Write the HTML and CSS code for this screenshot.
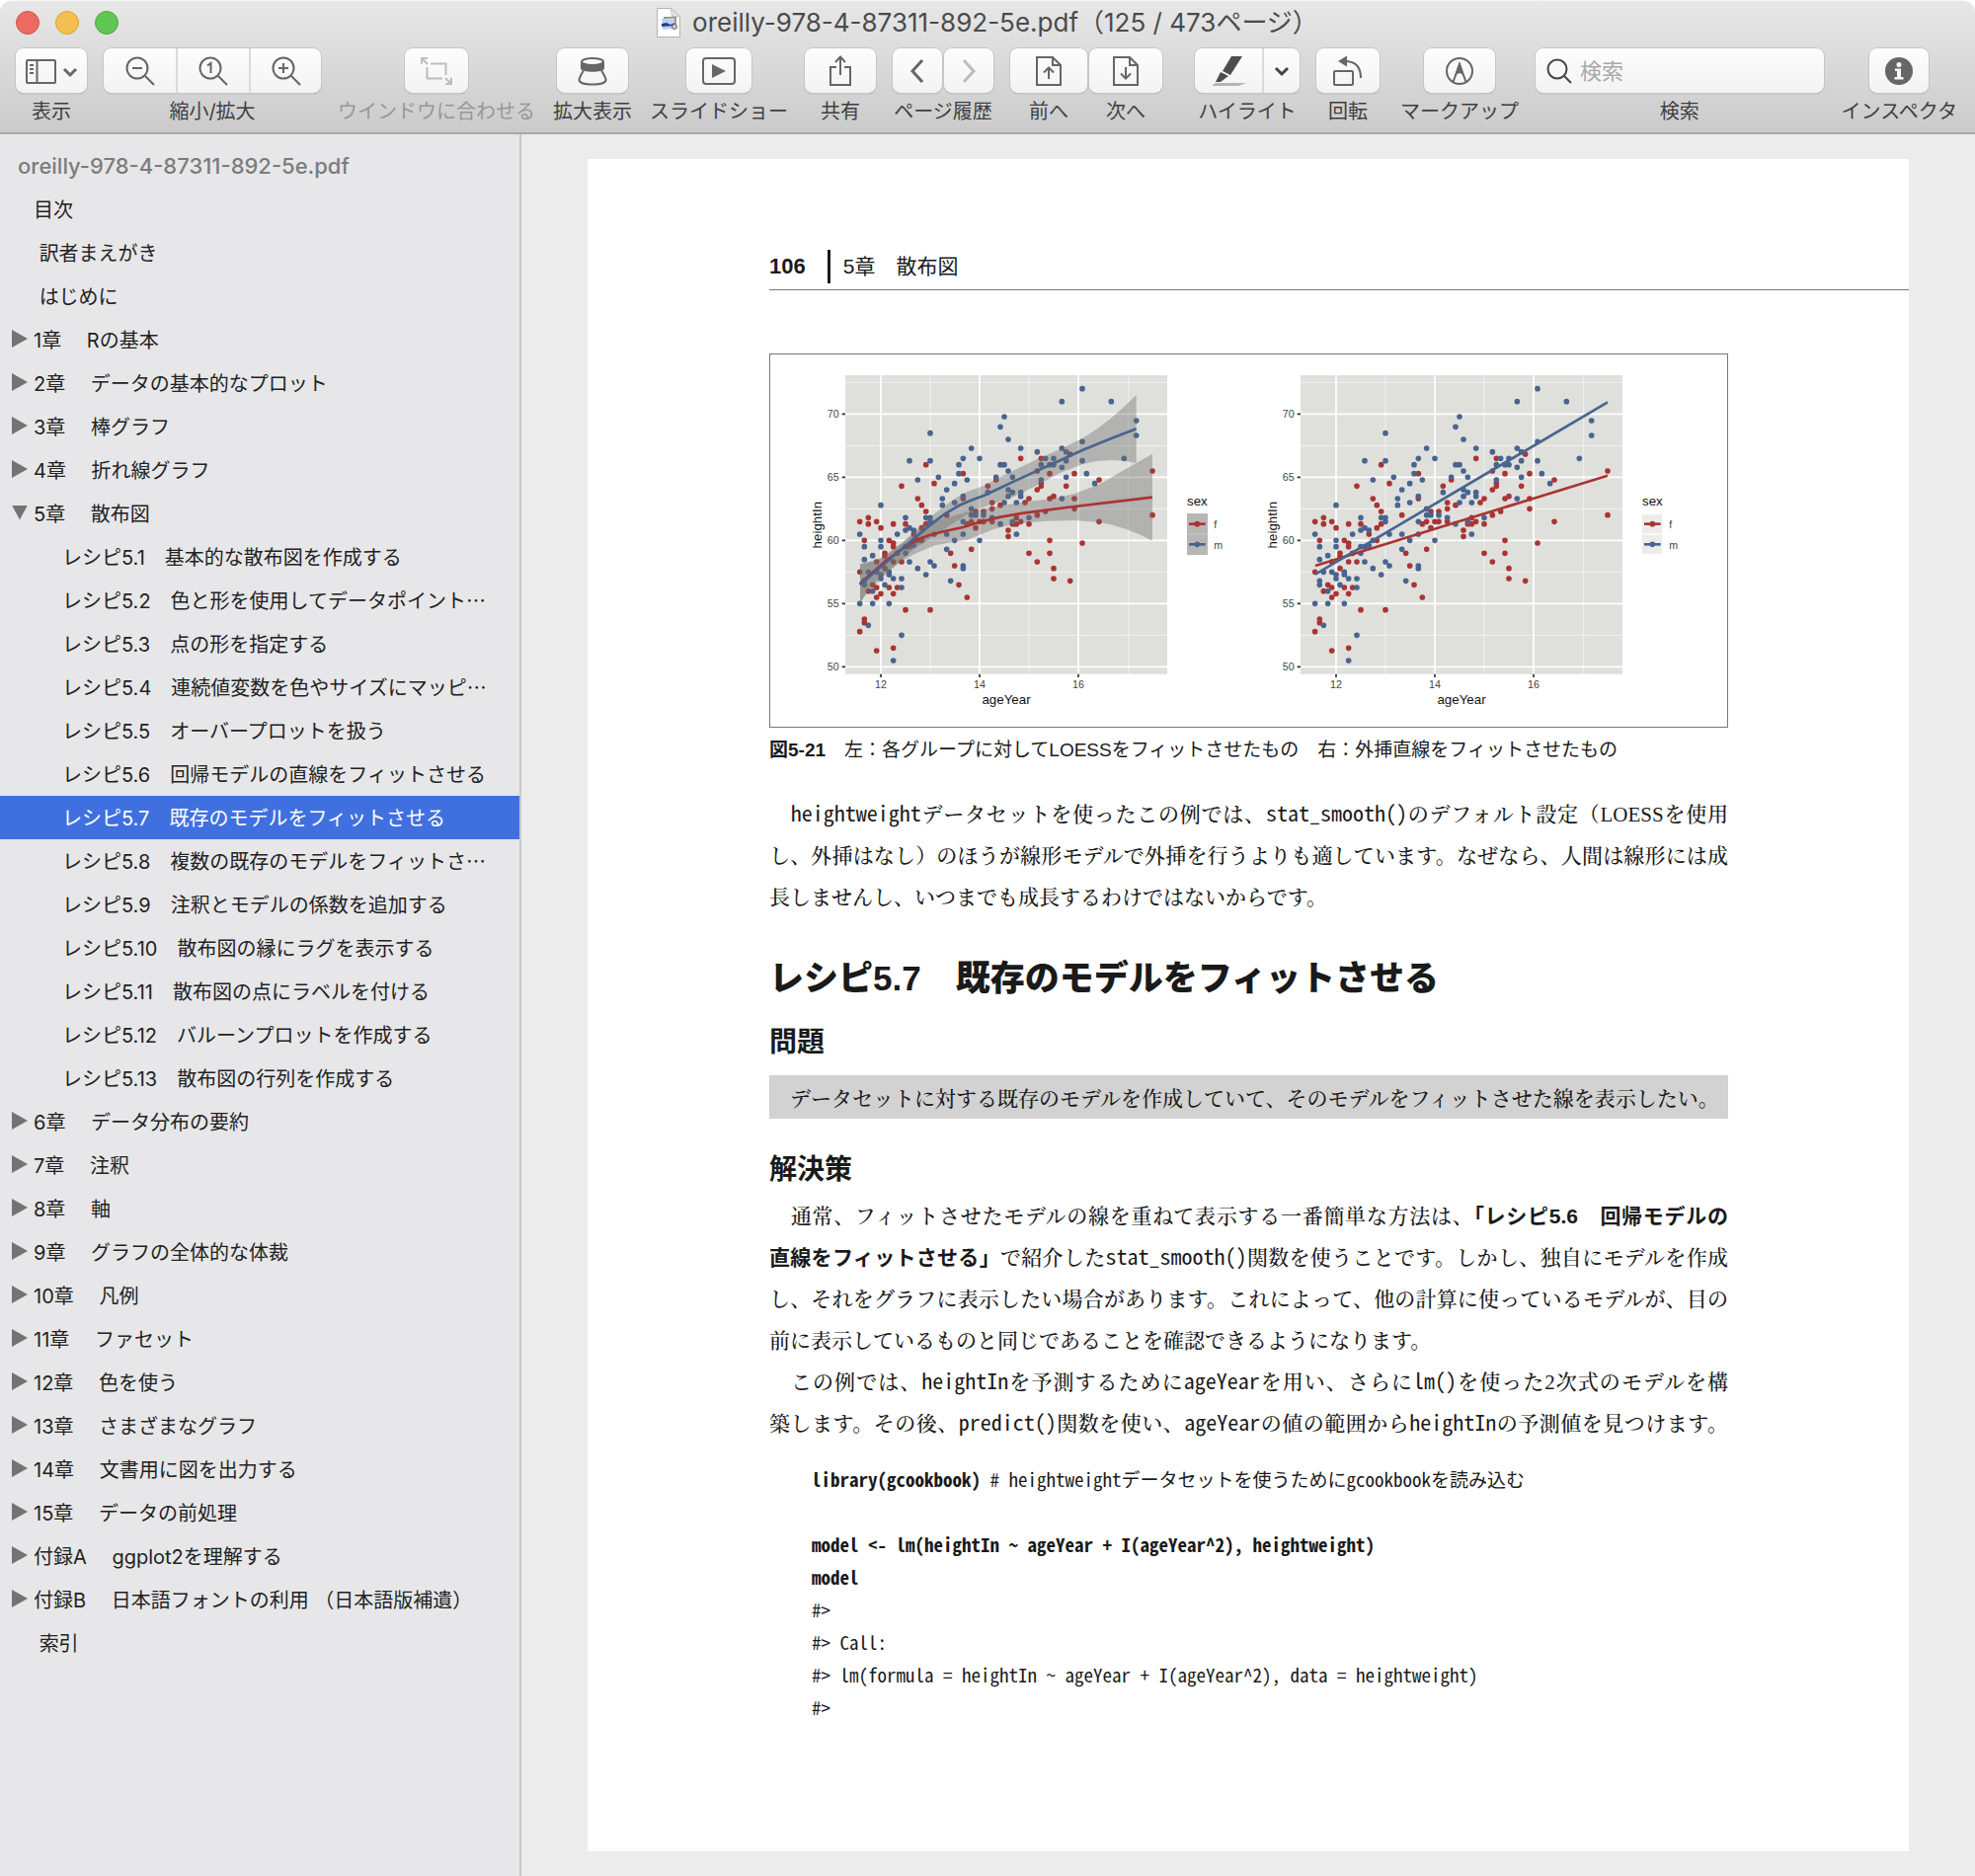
FILE: index.html
```html
<!DOCTYPE html>
<html lang="ja">
<head>
<meta charset="utf-8">
<meta name="viewport" content="width=device-width, initial-scale=1">
<title>oreilly-978-4-87311-892-5e.pdf</title>
<link rel="stylesheet" href="styles.css">
</head>
<body>
<header class="chrome">
  <div class="titlebar">
    <div class="lights">
      <button class="light close" aria-label="閉じる"></button>
      <button class="light minimize" aria-label="しまう"></button>
      <button class="light expand" aria-label="拡大"></button>
    </div>
    <div class="title">
      <svg class="doc-icon" width="24" height="30" viewBox="0 0 24 30" aria-hidden="true">
        <path d="M.5.5h14l9 8v21H.5z" fill="#fff" stroke="#b4b4b4"/>
        <path d="M14.500.5l1 8h8z" fill="#e4e4e4" stroke="#c4c4c4"/>
        <path d="M7 9l13 0 0 9-13 1z" fill="#a08a78"/>
        <path d="M5 11l13-1 1 11-13 1z" fill="#b9d2f2"/>
        <path d="M5 16l5-1 4 2 4-2 0 3-13 1z" fill="#27408b"/>
        <circle cx="18" cy="19" r="2.500" fill="#c9cdd2" stroke="#666"/>
      </svg>
      <span>oreilly-978-4-87311-892-5e.pdf（125 / 473ページ）</span>
    </div>
  </div>

  <div class="toolbar">
    <div class="tool">
      <button class="btn w72" aria-labelledby="l-view">
        <svg width="54" height="28" viewBox="0 0 54 28" class="line"><rect x="2" y="3" width="29" height="23" rx="1"/><path d="M12.500 3v23M5 8h4M5 12h4M5 16h4"/><path d="M40 12l6 6 6-6" stroke-width="3"/></svg>
      </button>
      <span class="label" id="l-view">表示</span>
    </div>
    <div class="tool">
      <div class="group">
        <button class="seg" aria-label="縮小"><svg width="30" height="30" viewBox="0 0 30 30" class="line"><circle cx="12" cy="12" r="10.500"/><path d="M20 20l9 9M7 12h10"/></svg></button>
        <button class="seg" aria-label="実際のサイズ"><svg width="30" height="30" viewBox="0 0 30 30" class="line"><circle cx="12" cy="12" r="10.500"/><path d="M20 20l9 9M9 9.500l3.500-2.500v10"/></svg></button>
        <button class="seg" aria-label="拡大"><svg width="30" height="30" viewBox="0 0 30 30" class="line"><circle cx="12" cy="12" r="10.500"/><path d="M20 20l9 9M7 12h10M12 7v10"/></svg></button>
      </div>
      <span class="label">縮小/拡大</span>
    </div>
    <div class="tool disabled">
      <button class="btn w64" disabled aria-labelledby="l-fit">
        <svg width="34" height="30" viewBox="0 0 34 30" class="line"><path d="M7.500 11v11.500H23M11 7.500h15.500V19"/><path d="M2 8V2h6M2 2l6 6M32 22v6h-6M32 28l-6-6"/></svg>
      </button>
      <span class="label" id="l-fit">ウインドウに合わせる</span>
    </div>
    <div class="tool roomy">
      <button class="btn w72" aria-labelledby="l-loupe">
        <svg width="30" height="30" viewBox="0 0 30 30"><path d="M3 6v6c0 5 24 5 24 0V6z" fill="#666"/><ellipse cx="15" cy="5.500" rx="11" ry="3.500" fill="#fafafa" stroke="#666" stroke-width="2"/><path d="M6 14C4 18 1.500 21 1.500 24c0 6 27 6 27 0 0-3-2.500-6-4.500-10" fill="none" stroke="#666" stroke-width="2"/></svg>
      </button>
      <span class="label" id="l-loupe">拡大表示</span>
    </div>
    <div class="tool">
      <button class="btn w66" aria-labelledby="l-slide">
        <svg width="34" height="28" viewBox="0 0 34 28" class="line"><rect x="1" y="1" width="32" height="26" rx="3"/><path d="M10 7l14 7-14 7z" fill="#666" stroke="none"/></svg>
      </button>
      <span class="label" id="l-slide">スライドショー</span>
    </div>
    <div class="tool">
      <button class="btn w72" aria-labelledby="l-share">
        <svg width="26" height="32" viewBox="0 0 26 32" class="line"><path d="M9 12H3v18h20V12h-6M13 20V2M8 7l5-5.500L18 7"/></svg>
      </button>
      <span class="label" id="l-share">共有</span>
    </div>
    <div class="tool">
      <div class="pair">
        <button class="btn w50" aria-label="戻る"><svg width="16" height="26" viewBox="0 0 16 26" class="line thick"><path d="M13 2L3 13l10 11"/></svg></button>
        <button class="btn w50 disabled" disabled aria-label="進む"><svg width="16" height="26" viewBox="0 0 16 26" class="line thick"><path d="M3 2l10 11L3 24"/></svg></button>
      </div>
      <span class="label">ページ履歴</span>
    </div>
    <div class="pair">
      <div class="tool">
        <button class="btn w78" aria-labelledby="l-prev"><svg width="28" height="32" viewBox="0 0 28 32" class="line"><path d="M2 2h16l8 8v20H2zM18 2v8h8M14 24V13M9 17.500l5-5 5 5"/></svg></button>
        <span class="label" id="l-prev">前へ</span>
      </div>
      <div class="tool">
        <button class="btn w74" aria-labelledby="l-next"><svg width="28" height="32" viewBox="0 0 28 32" class="line"><path d="M2 2h16l8 8v20H2zM18 2v8h8M14 12v11M9 18.500l5 5 5-5"/></svg></button>
        <span class="label" id="l-next">次へ</span>
      </div>
    </div>
    <div class="tool after-nav">
      <div class="group">
        <button class="seg w68" aria-labelledby="l-hl"><svg width="36" height="32" viewBox="0 0 36 32"><path d="M21 1h11L20 20l-8-4z" fill="#4d4d4d"/><path d="M10 17l8 4-8 6H5z" fill="#4d4d4d"/><path d="M5 28h31l-8 3H1z" fill="#b5b5b5"/></svg></button>
        <button class="seg w38" aria-label="ハイライトの色"><svg width="16" height="12" viewBox="0 0 16 12" class="line dark"><path d="M2 3l6 6 6-6" stroke-width="3"/></svg></button>
      </div>
      <span class="label" id="l-hl">ハイライト</span>
    </div>
    <div class="tool">
      <button class="btn w64" aria-labelledby="l-rot">
        <svg width="32" height="32" viewBox="0 0 32 32" class="line"><rect x="2" y="16" width="19" height="14" rx="1"/><path d="M13 6c10 0 16 5 16 17"/><path d="M6 6l9-5.500v11z" fill="#666" stroke="none"/></svg>
      </button>
      <span class="label" id="l-rot">回転</span>
    </div>
    <div class="tool after-rotate">
      <button class="btn w72" aria-labelledby="l-mark">
        <svg width="30" height="30" viewBox="0 0 30 30" class="line"><circle cx="15" cy="15" r="13"/><path d="M8.500 26L15 8l6.500 18"/><path d="M15 6l4.500 13-4.500-2-4.500 2z" fill="#666" stroke="none"/></svg>
      </button>
      <span class="label" id="l-mark">マークアップ</span>
    </div>
    <div class="tool search">
      <div class="field">
        <svg width="26" height="28" viewBox="0 0 26 28" class="line dark"><circle cx="11" cy="12" r="9.500"/><path d="M18 19l7 7"/></svg>
        <input type="search" id="q" placeholder="検索">
      </div>
      <label class="label" for="q">検索</label>
    </div>
    <div class="tool roomy">
      <button class="btn w60" aria-labelledby="l-info">
        <svg width="28" height="28" viewBox="0 0 28 28"><circle cx="14" cy="14" r="14" fill="#666"/><circle cx="14" cy="7.500" r="2.500" fill="#fafafa"/><path d="M10 11.500h6v8.500h2.500v2.500h-9V20H12v-6h-2z" fill="#fafafa"/></svg>
      </button>
      <span class="label" id="l-info">インスペクタ</span>
    </div>
  </div>
</header>

<div class="workspace">
  <nav class="sidebar" aria-label="目次">
    <h2 class="file">oreilly-978-4-87311-892-5e.pdf</h2>
    <ul class="tree">
      <li><a class="row" href="#">目次</a></li>
      <li><a class="row" href="#">&nbsp;訳者まえがき</a></li>
      <li><a class="row" href="#">&nbsp;はじめに</a></li>
      <li><a class="row closed" href="#">1章　&nbsp;Rの基本</a></li>
      <li><a class="row closed" href="#">2章　&nbsp;データの基本的なプロット</a></li>
      <li><a class="row closed" href="#">3章　&nbsp;棒グラフ</a></li>
      <li><a class="row closed" href="#">4章　&nbsp;折れ線グラフ</a></li>
      <li><a class="row open" href="#">5章　&nbsp;散布図</a>
        <ul class="tree sub">
          <li><a class="row" href="#">レシピ5.1　基本的な散布図を作成する</a></li>
          <li><a class="row" href="#">レシピ5.2　色と形を使用してデータポイント<span class="more">…</span></a></li>
          <li><a class="row" href="#">レシピ5.3　点の形を指定する</a></li>
          <li><a class="row" href="#">レシピ5.4　連続値変数を色やサイズにマッピ<span class="more">…</span></a></li>
          <li><a class="row" href="#">レシピ5.5　オーバープロットを扱う</a></li>
          <li><a class="row" href="#">レシピ5.6　回帰モデルの直線をフィットさせる</a></li>
          <li><a class="row selected" href="#" aria-current="true">レシピ5.7　既存のモデルをフィットさせる</a></li>
          <li><a class="row" href="#">レシピ5.8　複数の既存のモデルをフィットさ<span class="more">…</span></a></li>
          <li><a class="row" href="#">レシピ5.9　注釈とモデルの係数を追加する</a></li>
          <li><a class="row" href="#">レシピ5.10　散布図の縁にラグを表示する</a></li>
          <li><a class="row" href="#">レシピ5.11　散布図の点にラベルを付ける</a></li>
          <li><a class="row" href="#">レシピ5.12　バルーンプロットを作成する</a></li>
          <li><a class="row" href="#">レシピ5.13　散布図の行列を作成する</a></li>
        </ul>
      </li>
      <li><a class="row closed" href="#">6章　&nbsp;データ分布の要約</a></li>
      <li><a class="row closed" href="#">7章　&nbsp;注釈</a></li>
      <li><a class="row closed" href="#">8章　&nbsp;軸</a></li>
      <li><a class="row closed" href="#">9章　&nbsp;グラフの全体的な体裁</a></li>
      <li><a class="row closed" href="#">10章　&nbsp;凡例</a></li>
      <li><a class="row closed" href="#">11章　&nbsp;ファセット</a></li>
      <li><a class="row closed" href="#">12章　&nbsp;色を使う</a></li>
      <li><a class="row closed" href="#">13章　&nbsp;さまざまなグラフ</a></li>
      <li><a class="row closed" href="#">14章　&nbsp;文書用に図を出力する</a></li>
      <li><a class="row closed" href="#">15章　&nbsp;データの前処理</a></li>
      <li><a class="row closed" href="#">付録A　&nbsp;ggplot2を理解する</a></li>
      <li><a class="row closed" href="#">付録B　&nbsp;日本語フォントの利用 （日本語版補遺）</a></li>
      <li><a class="row" href="#">&nbsp;索引</a></li>
    </ul>
  </nav>

  <main class="canvas">
    <article class="sheet">
      <div class="running-head">
        <span class="folio">106</span>
        <span class="chapter">5章　散布図</span>
      </div>
      <div class="content">
        <figure class="figure">
          <svg class="plots" viewBox="0 27 2907 1131" role="img" aria-label="heightIn と ageYear の散布図">
            <defs>
              <g id="panel">
                <path d="M228 90h978v908H228z" fill="#dfe0dc"/>
                <path d="M228 112h978M228 304h978M228 496h978M228 688h978M228 880h978M486 90v908M786 90v908M1088 90v908" stroke="#f1f1ef" stroke-width="3"/>
                <path d="M228 208h978M228 400h978M228 592h978M228 784h978M228 976h978M336 90v908M636 90v908M936 90v908" stroke="#fff" stroke-width="5"/>
                <path d="M218 208h10M218 400h10M218 592h10M218 784h10M218 976h10M336 998v10M636 998v10M936 998v10" stroke="#333" stroke-width="5"/>
                <path class="dots female" d="M272 535h0M298 523h0M298 542h0M323 535h0M336 554h0M374 542h0M411 542h0M399 427h0M448 465h0M460 485h0M473 504h0M473 362h0M498 419h0M286 592h0M361 592h0M374 600h0M374 611h0M348 631h0M348 640h0M323 657h0M374 657h0M399 657h0M348 677h0M272 688h0M311 727h0M298 746h0M323 735h0M361 735h0M386 735h0M336 754h0M374 754h0M323 765h0M411 803h0M486 803h0M286 831h0M286 842h0M272 869h0M323 927h0M374 919h0M436 573h0M460 554h0M473 542h0M460 592h0M536 515h0M386 631h0M586 465h0M586 389h0M548 631h0M560 669h0M573 727h0M598 765h0M611 619h0M661 427h0M686 408h0M761 343h0M674 477h0M674 496h0M699 485h0M624 504h0M648 504h0M598 542h0M611 535h0M624 554h0M636 535h0M648 535h0M674 535h0M736 542h0M748 542h0M748 523h0M761 535h0M723 561h0M723 580h0M774 477h0M786 465h0M786 542h0M786 631h0M811 657h0M811 515h0M836 504h0M849 592h0M849 631h0M861 677h0M861 708h0M911 715h0M811 438h0M823 427h0M823 419h0M823 343h0M811 381h0M849 389h0M849 465h0M861 458h0M899 427h0M911 330h0M924 389h0M924 465h0M924 496h0M948 600h0M999 408h0M999 535h0M1161 381h0M1161 515h0"/>
                <path class="dots male" d="M272 573h0M336 485h0M286 611h0M286 650h0M311 638h0M336 592h0M336 611h0M386 573h0M411 523h0M411 561h0M423 554h0M436 561h0M411 611h0M423 611h0M436 607h0M448 592h0M411 631h0M423 657h0M448 677h0M473 696h0M486 657h0M498 669h0M473 523h0M486 523h0M486 535h0M498 573h0M298 688h0M323 688h0M336 696h0M336 708h0M286 715h0M286 727h0M361 688h0M361 696h0M374 708h0M399 708h0M348 727h0M399 735h0M311 746h0M272 784h0M311 784h0M361 784h0M298 850h0M399 880h0M374 957h0M423 350h0M486 350h0M486 266h0M448 408h0M511 400h0M536 438h0M523 465h0M523 485h0M560 477h0M560 419h0M573 389h0M573 362h0M586 343h0M586 458h0M598 408h0M611 312h0M636 343h0M611 496h0M611 515h0M624 515h0M648 515h0M674 523h0M586 535h0M586 573h0M536 573h0M560 592h0M536 619h0M548 715h0M586 669h0M586 677h0M636 592h0M661 446h0M686 400h0M699 362h0M711 362h0M723 381h0M736 400h0M723 438h0M736 446h0M723 458h0M711 477h0M748 477h0M761 446h0M761 458h0M699 542h0M736 535h0M748 573h0M786 523h0M699 247h0M711 216h0M723 285h0M761 312h0M811 323h0M836 343h0M823 362h0M849 362h0M861 362h0M861 343h0M886 312h0M899 323h0M886 370h0M899 350h0M823 408h0M886 465h0M899 400h0M948 292h0M948 350h0M948 131h0M886 170h0M1036 170h0M961 389h0M986 419h0M1075 343h0M1112 228h0M1112 273h0"/>
              </g>
              <g id="keys">
                <path class="trend female" d="M1272 542h50"/><path class="dots female" d="M1297 542h0"/>
                <path class="trend male" d="M1272 604h50"/><path class="dots male" d="M1297 604h0"/>
              </g>
            </defs>

            <g>
              <use href="#panel"/>
              <path class="ribbon" d="M273 665L330 650 400 600 450 560 520 527 600 505 680 490 740 480 800 472 860 465 924 450 999 422 1080 375 1161 329V593L1120 573 1080 557 1040 545 999 537 924 531 840 533 750 540 680 557 600 590 550 598 500 607 440 632 400 655 330 705 295 745 273 783z"/>
              <path class="ribbon" d="M273 663L311 655 348 640 400 600 450 555 500 510 560 465 590 447 650 425 700 398 800 350 880 315 948 282 990 255 1030 225 1075 186 1112 150V357L1075 350 1036 348 990 351 950 360 880 387 800 430 740 460 680 480 640 494 600 512 540 550 480 590 440 615 400 650 336 710 295 750 273 783z"/>
              <path class="trend female" d="M272 724L350 655 411 610 450 588 486 575 530 564 586 552 640 535 699 521 774 508 924 489 1161 461"/>
              <path class="trend male" d="M272 727L340 669 411 608 486 545 530 512 573 486 610 470 650 455 761 403 861 358 948 318 1036 282 1112 253"/>
              <path d="M1266 510h63v126h-63z" fill="#b6b7b5"/><path d="M1266 573h63" stroke="#c8c8c6" stroke-width="3"/>
              <use href="#keys"/>
              <g class="ticks"><text x="209" y="220" text-anchor="end">70</text><text x="209" y="412" text-anchor="end">65</text><text x="209" y="604" text-anchor="end">60</text><text x="209" y="796" text-anchor="end">55</text><text x="209" y="988" text-anchor="end">50</text><text x="336" y="1040" text-anchor="middle">12</text><text x="636" y="1040" text-anchor="middle">14</text><text x="936" y="1040" text-anchor="middle">16</text><text x="1348" y="555">f</text><text x="1348" y="617">m</text></g>
              <g class="names"><text x="717" y="1088" text-anchor="middle">ageYear</text><text transform="translate(156 545) rotate(-90)" text-anchor="middle">heightIn</text><text x="1266" y="487">sex</text></g>
            </g>

            <g transform="translate(1383 0)">
              <use href="#panel"/>
              <path class="trend female" d="M273 669L1161 395"/>
              <path class="trend male" d="M273 695L1161 172"/>
              <path d="M1266 513h60v58h-60zM1266 575h60v58h-60z" fill="#ececea"/>
              <use href="#keys"/>
              <g class="ticks"><text x="209" y="220" text-anchor="end">70</text><text x="209" y="412" text-anchor="end">65</text><text x="209" y="604" text-anchor="end">60</text><text x="209" y="796" text-anchor="end">55</text><text x="209" y="988" text-anchor="end">50</text><text x="336" y="1040" text-anchor="middle">12</text><text x="636" y="1040" text-anchor="middle">14</text><text x="936" y="1040" text-anchor="middle">16</text><text x="1348" y="555">f</text><text x="1348" y="617">m</text></g>
              <g class="names"><text x="717" y="1088" text-anchor="middle">ageYear</text><text transform="translate(156 545) rotate(-90)" text-anchor="middle">heightIn</text><text x="1266" y="487">sex</text></g>
            </g>
          </svg>
          <figcaption><b>図5-21</b>　左：各グループに対してLOESSをフィットさせたもの　右：外挿直線をフィットさせたもの</figcaption>
        </figure>

        <p class="intro">
          <span class="ln">　<code>heightweight</code>データセットを使ったこの例では、<code>stat_smooth()</code>のデフォルト設定（<span class="roman">LOESS</span>を使用</span>
          <span class="ln">し、外挿はなし）のほうが線形モデルで外挿を行うよりも適しています。なぜなら、人間は線形には成</span>
          <span class="ln end">長しませんし、いつまでも成長するわけではないからです。</span>
        </p>

        <h1>レシピ5.7　既存のモデルをフィットさせる</h1>
        <h2>問題</h2>
        <p class="problem">　データセットに対する既存のモデルを作成していて、そのモデルをフィットさせた線を表示したい。</p>

        <h2 class="solution">解決策</h2>
        <p>
          <span class="ln">　通常、フィットさせたモデルの線を重ねて表示する一番簡単な方法は、<b>「レシピ5.6　回帰モデルの</b></span>
          <span class="ln"><b>直線をフィットさせる」</b>で紹介した<code>stat_smooth()</code>関数を使うことです。しかし、独自にモデルを作成</span>
          <span class="ln">し、それをグラフに表示したい場合があります。これによって、他の計算に使っているモデルが、目の</span>
          <span class="ln end">前に表示しているものと同じであることを確認できるようになります。</span>
        </p>
        <p>
          <span class="ln">　この例では、<code>heightIn</code>を予測するために<code>ageYear</code>を用い、さらに<code>lm()</code>を使った<span class="roman">2</span>次式のモデルを構</span>
          <span class="ln">築します。その後、<code>predict()</code>関数を使い、<code>ageYear</code>の値の範囲から<code>heightIn</code>の予測値を見つけます。</span>
        </p>
<pre class="listing"><b>library(gcookbook)</b> # heightweightデータセットを使うためにgcookbookを読み込む

<b>model &lt;- lm(heightIn ~ ageYear + I(ageYear^2), heightweight)
model</b>
#&gt;
#&gt; Call:
#&gt; lm(formula = heightIn ~ ageYear + I(ageYear^2), data = heightweight)
#&gt;</pre>
      </div>
    </article>
  </main>
</div>
</body>
</html>
```

FILE: styles.css
```css
* { box-sizing: border-box; }

body {
  margin: 0;
  min-height: 100vh;
  display: flex;
  flex-direction: column;
  background: #fff;
  color: #1f1f1f;
  font-family: Inter, "Noto Sans CJK JP", sans-serif;
  font-size: 20px;
}

button {
  padding: 0;
  border: 0;
  font: inherit;
  color: inherit;
}

svg { display: block; }

/* Window chrome */
.chrome {
  height: 136px;
  background: linear-gradient(#e7e7e7, #cbcbcb);
  border-top: 1px solid #f5f5f5;
  border-bottom: 2px solid #a8a8a8;
  border-radius: 12px 12px 0 0;
}

.titlebar {
  display: grid;
  grid-template-columns: 1fr auto 1fr;
  align-items: center;
  height: 43px;
  padding: 0 16px;
}

.lights { display: flex; gap: 16px; }

.light {
  width: 24px;
  height: 24px;
  border-radius: 50%;
}

.close { background: #ec6a5f; border: 1px solid #d0554b; }
.minimize { background: #f5bf4f; border: 1px solid #d8a240; }
.expand { background: #61c654; border: 1px solid #53a942; }

.title {
  display: flex;
  align-items: center;
  gap: 12px;
  color: #4a4a4a;
  font-size: 26px;
  line-height: 36px;
  white-space: nowrap;
}

.toolbar {
  display: flex;
  gap: 17px;
  padding: 5px 17px 0 16px;
}

.tool {
  display: flex;
  flex-direction: column;
  align-items: center;
  gap: 5px;
}

.roomy { padding: 0 1px; }
.after-nav { margin-left: 16px; }
.after-rotate { margin-left: 4px; }

.btn, .group, .field {
  display: flex;
  align-items: center;
  justify-content: center;
  height: 45px;
  background: linear-gradient(#fdfdfd, #f3f3f3);
  border-radius: 8px;
  box-shadow: 0 0 0 1px #c6c6c6, 0 1px 1px #909090;
}

.seg {
  display: flex;
  align-items: center;
  justify-content: center;
  width: 73px;
  height: 45px;
  background: none;
}

.seg + .seg { border-left: 2px solid #dadada; }
.seg:nth-child(2):not(:last-child) { width: 74px; }

.w38 { width: 38px; }
.w50 { width: 50px; }
.w60 { width: 60px; }
.w64 { width: 64px; }
.w66 { width: 66px; }
.w68 { width: 68px; }
.w72 { width: 72px; }
.w74 { width: 74px; }
.w78 { width: 78px; }

.pair { display: flex; gap: 2px; }

.label {
  color: #3f3f3f;
  line-height: 28px;
  white-space: nowrap;
}

.disabled .label { color: #979797; }
.disabled svg { opacity: .4; }

.line { fill: none; stroke: #666; stroke-width: 2; }
.thick { stroke-width: 3; }
.dark { stroke: #454545; }

.search { flex: 1; align-items: stretch; min-width: 120px; }
.search .label { text-align: center; }

.field {
  justify-content: flex-start;
  gap: 8px;
  padding: 0 11px;
}

.field input {
  flex: 1;
  min-width: 0;
  padding: 0;
  border: 0;
  outline: 0;
  background: none;
  font: inherit;
  font-size: 22px;
}

.field input::placeholder { color: #a8a8a8; }

/* Outline sidebar */
.workspace { display: flex; flex: 1; }

.sidebar {
  flex: none;
  width: 528px;
  padding-top: 10px;
  background: #e7e7e9;
  border-right: 2px solid #c9c9c9;
}

.file {
  margin: 0;
  padding-left: 18px;
  color: #7c7c7c;
  font-size: 22px;
  font-weight: 500;
  line-height: 44px;
}

.tree {
  margin: 0;
  padding: 0;
  list-style: none;
}

.row {
  display: flex;
  align-items: center;
  height: 44px;
  padding: 0 0 2px 34px;
  color: #222;
  text-decoration: none;
  white-space: nowrap;
}

.sub .row { padding-left: 63px; }
.row.closed, .row.open { padding-left: 12px; }

.row.closed::before, .row.open::before {
  content: "";
  width: 16px;
  height: 18px;
  margin-right: 6px;
  background: #737373;
  clip-path: polygon(0 0, 100% 50%, 0 100%);
}

.row.open::before {
  height: 15px;
  clip-path: polygon(0 0, 100% 0, 50% 100%);
}

.row.selected { background: #4070e0; color: #fff; }
.more { font-family: "Noto Sans CJK JP", sans-serif; }

/* Document page */
.canvas {
  display: flex;
  flex: 1;
  min-width: 0;
  padding: 25px 67px;
  background: #ececec;
}

.sheet {
  flex: 1;
  min-width: 0;
  padding: 92px 0 0 184px;
  background: #fff;
  color: #1a1a1a;
  font-family: "Liberation Sans", "Noto Sans CJK JP", sans-serif;
  font-size: 21px;
}

.running-head {
  display: flex;
  align-items: center;
  gap: 22px;
  padding-bottom: 6px;
  border-bottom: 1px solid #777;
  line-height: 34px;
}

.folio {
  font-size: 22px;
  font-weight: 700;
}

.chapter {
  padding-left: 13px;
  border-left: 3px solid #1a1a1a;
}

.content { padding: 64px 183px 64px 0; }

.figure { margin: 0; }

.plots {
  width: 100%;
  border: 1px solid #777;
}

.dots { fill: none; stroke-linecap: round; stroke-width: 17; }
.trend { fill: none; stroke-width: 8; }
.female { stroke: #aa3433; }
.male { stroke: #48648f; }
.ribbon { fill: #6e6e6e; fill-opacity: .4; }
.ticks { fill: #444; font-size: 32px; }
.names { fill: #111; font-size: 40px; }

figcaption {
  margin-top: 8px;
  font-size: 19px;
  line-height: 30px;
  white-space: nowrap;
}

p {
  margin: 0;
  font-family: "Noto Serif CJK JP", "Noto Sans CJK JP", serif;
  font-weight: 500;
  line-height: 42px;
}

p b {
  font-family: "Liberation Sans", "Noto Sans CJK JP", sans-serif;
  line-height: 0;
}

.intro { margin-top: 27px; }

.ln {
  display: block;
  height: 42px;
  text-align: justify;
  text-align-last: justify;
  white-space: nowrap;
}

.ln.end { text-align-last: left; }

.roman {
  font-family: "Liberation Serif", serif;
  line-height: 0;
}

code {
  font-family: "Noto Sans Mono CJK JP", "Liberation Mono", monospace;
  font-size: 22px;
  font-weight: 400;
  line-height: 0;
}

h1 {
  margin: 39px 0 0;
  font-size: 35px;
  font-weight: 900;
  line-height: 48px;
}

.sheet h2 {
  margin: 21px 0 0;
  font-size: 28px;
  font-weight: 700;
  line-height: 40px;
}

.problem {
  margin-top: 13px;
  background: #d2d2d2;
  line-height: 44px;
  white-space: nowrap;
}

.sheet .solution { margin: 32px 0 4px; }

.listing {
  margin: 20px 0 0;
  padding-left: 43px;
  font-family: "Noto Sans Mono CJK JP", "Liberation Mono", monospace;
  font-size: 19px;
  line-height: 33px;
}
```
